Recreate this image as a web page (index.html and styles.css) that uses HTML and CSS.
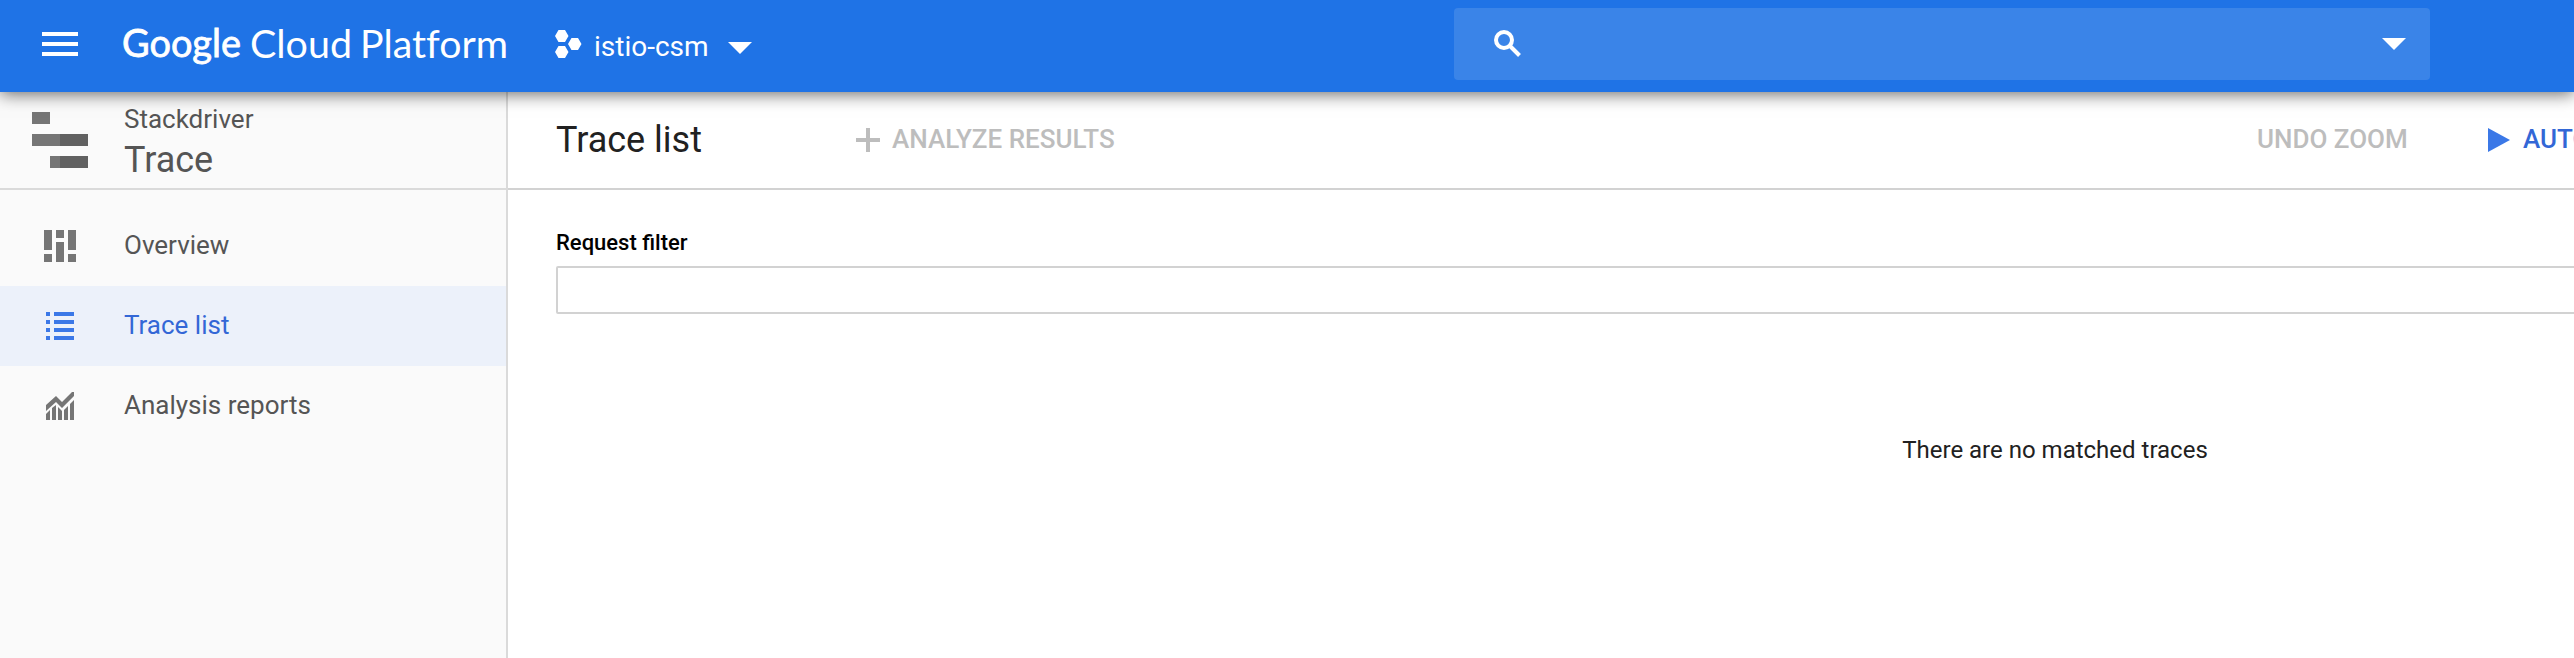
FILE: index.html
```
<!DOCTYPE html>
<html lang="en">
<head>
<meta charset="utf-8">
<title>Trace list</title>
<link rel="stylesheet" href="styles.css">
</head>
<body>
<header class="topbar">
  <svg class="menu" width="36" height="24" fill="#fff"><path d="M0 0h36v4H0zM0 10h36v4H0zM0 20h36v4H0z"/></svg>
  <svg class="logo" width="390" height="92" fill="#fff">
    <text class="logo-google" x="0" y="56.500" textLength="119" lengthAdjust="spacingAndGlyphs">Google</text>
    <text x="128" y="58" textLength="102" lengthAdjust="spacingAndGlyphs">Cloud</text>
    <text x="238" y="58" textLength="148" lengthAdjust="spacingAndGlyphs">Platform</text>
  </svg>
  <div class="project">
    <svg width="27" height="28" fill="#fff"><path d="M3.5 0h6.5l3.5 6-3.5 6H3.500L0 6zM3.500 16h6.500l3.500 6-3.500 6H3.500L0 22zM16.500 8h6.500l3.500 6-3.500 6h-6.500L13 14z"/></svg>
    <span class="project-name">istio-csm</span>
    <svg class="project-arrow" width="24" height="12" fill="#fff"><path d="M0 0h24L12 12z"/></svg>
  </div>
  <div class="search">
    <svg width="28" height="28" fill="none" stroke="#fff" stroke-width="4"><circle cx="10" cy="10" r="8"/><path d="M15.500 15.500L25.500 25.500"/></svg>
    <svg width="24" height="12" fill="#fff"><path d="M0 0h24L12 12z"/></svg>
  </div>
</header>
<div class="layout">
  <nav class="sidebar">
    <div class="product">
      <svg width="56" height="56"><path fill="#757575" d="M0 0h18v12H0zM0 22h28v12H0zM18 44h10v12H18z"/><path fill="#616161" d="M28 22h28v12H28zM28 44h28v12H28z"/></svg>
      <div class="product-text">
        <div class="suite">Stackdriver</div>
        <div class="name">Trace</div>
      </div>
    </div>
    <div class="items">
      <a class="item">
        <svg width="32" height="32" fill="#757575"><path d="M0 0h8v20H0zM0 24h8v8H0zM12 0h8v8h-8zM12 12h8v20h-8zM24 0h8v20h-8zM24 24h8v8h-8z"/></svg>
        <span>Overview</span>
      </a>
      <a class="item active">
        <svg width="32" height="32" fill="#3b78e7"><path d="M2 2h4v4H2zM10 2h20v4H10zM2 10h4v4H2zM10 10h20v4H10zM2 18h4v4H2zM10 18h20v4H10zM2 26h4v4H2zM10 26h20v4H10z"/></svg>
        <span>Trace list</span>
      </a>
      <a class="item">
        <svg width="32" height="32" fill="#757575"><path d="M2 15L12 6l6 6L28 2h2v4L18 18l-6-6-10 9zM2 24l4-4v10H2zM8 18l4-3v15H8zM14 17l4 4v9h-4zM20 20l4-4v14h-4zM26 14l4-4v20h-4z"/></svg>
        <span>Analysis reports</span>
      </a>
    </div>
  </nav>
  <main class="main">
    <div class="toolbar">
      <h1 class="title">Trace list</h1>
      <div class="action analyze">
        <svg width="24" height="24" fill="#bdbdbd"><path d="M10 0h4v10h10v4H14v10h-4V14H0v-4h10z"/></svg>
        <span>ANALYZE RESULTS</span>
      </div>
      <div class="action undo">UNDO ZOOM</div>
      <div class="action auto">
        <svg width="22" height="24" fill="#3b78e7"><path d="M0 0l22 12L0 24z"/></svg>
        <span>AUTO</span>
      </div>
    </div>
    <div class="content">
      <label class="label" for="filter">Request filter</label>
      <input class="filter" id="filter" type="text">
      <p class="empty">There are no matched traces</p>
    </div>
  </main>
</div>
</body>
</html>
```
FILE: styles.css
```
* { box-sizing: border-box; }
body {
  margin: 0;
  width: 2574px;
  height: 658px;
  overflow: hidden;
  background: #fff;
  color: #212121;
  font-family: Roboto, "Liberation Sans", sans-serif;
  font-size: 26px;
}
svg { display: block; flex: none; }
.topbar {
  position: relative;
  z-index: 1;
  display: flex;
  height: 92px;
  padding-left: 42px;
  background: #1f73e6;
  box-shadow: 0 2px 16px rgba(0, 0, 0, 0.6);
}
.menu { margin-top: 32px; }
.logo {
  flex: none;
  margin-left: 44px;
  font-family: Lato, sans-serif;
  font-size: 39px;
  font-variant-ligatures: none;
}
.logo-google { stroke: #fff; stroke-width: 0.8px; }
.project {
  display: flex;
  flex: none;
  width: 942px;
  padding: 30px 0 0 43px;
  color: #fff;
}
.project-name {
  width: 115px;
  margin: 1px 1px 0 12px;
  font-size: 28px;
  line-height: 32px;
  white-space: nowrap;
}
.project-arrow { margin: 12px 0 0 18px; }
.search {
  display: flex;
  flex: none;
  justify-content: space-between;
  width: 976px;
  height: 72px;
  margin-top: 8px;
  padding: 22px 24px 0 40px;
  border-radius: 4px;
  background: #3a84e8;
}
.search svg:last-child { margin-top: 8px; }
.search svg:first-child { overflow: visible; }
.layout { display: flex; height: 566px; }
.sidebar {
  flex: none;
  width: 508px;
  border-right: 2px solid #dadada;
  background: #fafafa;
}
.product {
  display: flex;
  height: 98px;
  padding: 20px 0 0 32px;
  border-bottom: 2px solid #dadada;
  color: #555;
}
.product-text { margin: -9px 0 0 36px; }
.suite { line-height: 32px; }
.name { font-size: 36px; line-height: 50px; }
.items { padding-top: 16px; }
.item {
  display: flex;
  align-items: center;
  height: 80px;
  padding-left: 44px;
  color: #555;
}
.item span { margin: -2px 0 0 48px; }
.active { background: #ecf1fa; color: #3367d6; }
.main { flex: none; width: 2066px; overflow: hidden; }
.toolbar {
  display: flex;
  height: 98px;
  padding: 24px 0 0 48px;
  border-bottom: 2px solid #d2d2d2;
  line-height: 46px;
  white-space: nowrap;
}
.title {
  flex: none;
  width: 300px;
  margin: 0;
  font-size: 36px;
  font-weight: 400;
  line-height: 48px;
}
.action { display: flex; flex: none; color: #bdbdbd; font-weight: 500; }
.analyze { width: 1401px; }
.analyze svg { margin: 12px 12px 0 0; }
.undo { width: 231px; }
.auto { color: #3367d6; }
.auto svg { margin: 12px 13px 0 0; }
.content { padding: 40px 0 0 48px; }
.label {
  display: block;
  color: #000;
  font-size: 22px;
  font-weight: 500;
  line-height: 26px;
}
.filter {
  display: block;
  width: 2998px;
  height: 48px;
  margin-top: 10px;
  border: 2px solid #d2d2d2;
  border-radius: 2px;
}
.empty {
  width: 2998px;
  margin: 122px 0 0;
  font-size: 24px;
  line-height: 28px;
  text-align: center;
}
```
